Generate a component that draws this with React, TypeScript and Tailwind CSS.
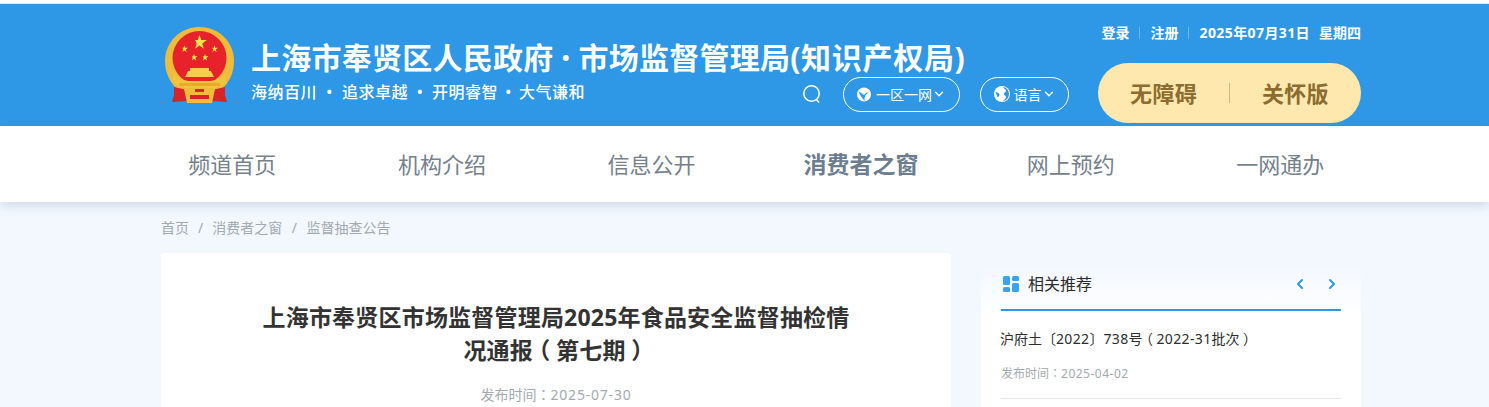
import { ChevronDown, ChevronLeft, ChevronRight } from "lucide-react";

const cjk = "font-['Noto_Sans','Noto_Sans_CJK_SC',sans-serif]";

const navItems = ["频道首页", "机构介绍", "信息公开", "消费者之窗", "网上预约", "一网通办"];

function Colon() {
  return <span className="font-['Noto_Sans_CJK_TC',sans-serif] leading-none">：</span>;
}

function Emblem() {
  const star = "M0-5 1.2-1.6 4.8-1.6 1.9.6 2.9 4.1 0 2 -2.9 4.1 -1.9.6 -2.9-1.6 -1.2-1.6Z";
  return (
    <svg width="70" height="78" viewBox="0 0 70 78" className="shrink-0">
      <path d="M34.5 0C15 0 0 15 0 34c0 13 6 23 13 29h43c7-6 13-16 13-29C69 15 54 0 34.5 0Z" fill="#eebb3a" />
      <circle cx="34.5" cy="31" r="27" fill="#e8222b" />
      <path transform="translate(34.5 15.5) scale(1.5)" d={star} fill="#ffe14d" />
      <path transform="translate(19.5 22) scale(.72)" d={star} fill="#ffe14d" />
      <path transform="translate(49.5 22) scale(.72)" d={star} fill="#ffe14d" />
      <path transform="translate(29 30.5) scale(.72)" d={star} fill="#ffe14d" />
      <path transform="translate(40 30.5) scale(.72)" d={star} fill="#ffe14d" />
      <path d="M25 41h19v3h2l3 6H20l3-6h2Z" fill="#f5cd4e" />
      <path d="M9 46c4 6 10 8 17 8h17c7 0 13-2 17-8l2 10-12 5H19L7 56Z" fill="#f1c33f" />
      <path d="M14 56h41v3H14Z" fill="#e8a92c" />
      <path d="M9 60l13 3 3 9-3 2-15 1 2-7Z" fill="#d9232b" />
      <path d="M60 60l-13 3-3 9 3 2 15 1-2-7Z" fill="#d9232b" />
      <path d="M19 62h31l-3 14H22Z" fill="#f0bd38" />
      <path d="M25 68h19v4H25Z" fill="#d9232b" />
      <path d="M30 62h9v3h-9Z" fill="#d9232b" />
    </svg>
  );
}

function Globe() {
  return (
    <svg width="16" height="16" viewBox="0 0 16 16" className="shrink-0">
      <circle cx="8" cy="8" r="8" fill="#fff" />
      <path d="M9 1c1 2 3 2 3 4 0 1-2 1-2 3s2 1 2 3-2 3-3 4c3 0 6-3 6-7s-3-7-6-7ZM1.500 6c2 0 3 1 4 2 0 2-1 3-2 3Z" fill="#2e98e6" />
    </svg>
  );
}

function AreaIcon() {
  return (
    <svg width="14" height="15" viewBox="0 0 14 15" className="shrink-0">
      <circle cx="7" cy="7.500" r="7" fill="#fff" />
      <path d="M1.500 4.500c3 2 6 2 11 .5-2 1-3 2-4 3-1 2-1 4-1 6-2-3-5-6-6-9.500Z" fill="#2e98e6" />
      <path d="M4 6.500l5-.5-2 2Z" fill="#fff" />
    </svg>
  );
}

export default function App() {
  return (
    <div className={`h-[407px] overflow-hidden bg-[#f3f8ff] ${cjk}`}>
      <div className="h-1 border-t-2 border-b border-t-white border-b-[#e4e6e8] bg-white" />
      {/* Header */}
      <header className="h-[122px] bg-[#2e98e6] pl-[161px]">
        <div className="flex h-full w-[1200px] justify-between">
          <div className="flex w-[600px] pt-[23px] pl-[4px]">
            <Emblem />
            <div className="ml-[16px] flex flex-col">
              <h1 className="mt-[11px] flex items-center text-[30px] leading-[40px] font-bold tracking-[0.25px] whitespace-nowrap text-white">
                <span>上海市奉贤区人民政府</span>
                <span className="w-[25px] text-center text-[20px]">•</span>
                <span>市场监督管理局</span>
                <span className="tracking-[0.7px]">(知识产权局)</span>
              </h1>
              <p className="mt-[4px] flex text-[16px] leading-[20px] font-medium tracking-[0.5px] whitespace-nowrap text-white">
                <span>海纳百川</span>
                <span className="w-[25px] text-center">•</span>
                <span>追求卓越</span>
                <span className="w-[24px] text-center">•</span>
                <span>开明睿智</span>
                <span className="w-[21px] text-center">•</span>
                <span>大气谦和</span>
              </p>
            </div>
          </div>
          <div className="flex flex-col items-end">
            <div className="mt-[19px] flex items-center text-[14px] leading-5 font-bold whitespace-nowrap text-white">
              <span>登录</span>
              <span className="mr-[11px] ml-[9px] h-3 w-px bg-[#6fb8ee]" />
              <span>注册</span>
              <span className="mr-[11px] ml-[9px] h-3 w-px bg-[#6fb8ee]" />
              <span className="tracking-[0.4px]">2025年07月31日</span>
              <span className="ml-[9px]">星期四</span>
            </div>
            <div className="mt-[20px] flex items-center">
              <svg width="20" height="20" viewBox="0 0 20 20" fill="none" stroke="#fff" strokeWidth="1.6" className="mt-[2px] mr-[21px]">
                <circle cx="9.500" cy="9.500" r="7.700" />
                <path d="M14.500 15.500l2.500 3" />
              </svg>
              <div className="mt-[2px] flex h-[35px] w-[117px] items-center justify-center rounded-full border border-white text-[14px] text-white">
                <AreaIcon />
                <span className="ml-[5px]">一区一网</span>
                <ChevronDown className="h-[14px] w-[14px]" strokeWidth={2.5} />
              </div>
              <div className="mt-[2px] ml-[20px] flex h-[35px] w-[89px] items-center justify-center rounded-full border border-white text-[14px] text-white">
                <Globe />
                <span className="ml-[4px]">语言</span>
                <ChevronDown className="h-[14px] w-[14px]" strokeWidth={2.5} />
              </div>
              <div className="ml-[29px] flex h-[60px] w-[263px] items-center justify-center rounded-[30px] bg-[#fee8ae] text-[22px] font-bold tracking-[0.3px] text-[#8c6d2f]">
                <span>无障碍</span>
                <span className="mx-[32px] h-5 w-px bg-[#d2b778]" />
                <span>关怀版</span>
              </div>
            </div>
          </div>
        </div>
      </header>

      {/* Nav */}
      <nav className="flex h-[76px] bg-white pl-[127.500px] shadow-[0_4px_10px_rgba(110,130,160,0.25)]">
        {navItems.map((item, i) => (
          <a
            key={item}
            className={`flex w-[209.6px] items-center justify-center whitespace-nowrap ${
              i === 3 ? "text-[23px] font-bold text-[#6b7d8f]" : "text-[22px] font-normal text-[#75818c]"
            }`}
          >
            {item}
          </a>
        ))}
      </nav>

      {/* Breadcrumb */}
      <div className="flex items-center pt-[16px] pl-[161px] text-[14px] leading-5 text-[#a3a9b0]">
        <span>首页</span>
        <span className="mx-[9px]">/</span>
        <span>消费者之窗</span>
        <span className="mx-[9.500px]">/</span>
        <span>监督抽查公告</span>
      </div>

      <div className="mt-[15px] flex pl-[161px]">
        {/* Article */}
        <main className="h-[200px] w-[790px] rounded-t-[4px] bg-white px-[95px] pt-[48px] text-center">
          <h2 className="text-[23px] leading-[33px] font-bold tracking-[0.2px] text-[#333]">
            <span className="block">上海市奉贤区市场监督管理局2025年食品安全监督抽检情</span>
            <span className="flex justify-center">
              <span>况通报</span>
              <span className="w-[23px] text-center [font-feature-settings:'halt']">（</span>
              <span>第七期</span>
              <span className="w-[23px] text-center [font-feature-settings:'halt']">）</span>
            </span>
          </h2>
          <p className="mt-[18px] text-[14px] leading-5 text-[#a3a9b0]">
            发布时间<Colon />
            <span className="tracking-[0.8px]">2025-07-30</span>
          </p>
        </main>

        {/* Sidebar */}
        <aside className="mt-[13px] ml-[30px] h-[200px] w-[380px] bg-gradient-to-b from-[#f3f8ff] to-white to-[50px] px-[20px]">
          <div className="flex h-[45px] items-center justify-between border-b-2 border-[#2e98e6] pb-[8px]">
            <div className="flex items-center">
              <svg width="16" height="16" viewBox="0 0 16 16" className="ml-[2px]">
                <rect x="0" y="0" width="7" height="9" rx="1.500" fill="#38a3f0" />
                <rect x="9" y="0" width="7" height="5" rx="1.500" fill="#38a3f0" />
                <rect x="0" y="11" width="7" height="5" rx="1.500" fill="#38a3f0" />
                <rect x="9" y="7" width="7" height="9" rx="1.500" fill="#38a3f0" />
              </svg>
              <span className="ml-[9px] text-[16px] text-[#2c2c2c]">相关推荐</span>
            </div>
            <div className="mr-[1px] flex items-center gap-[16px] text-[#2e98e6]">
              <ChevronLeft className="h-[16px] w-[16px]" strokeWidth={3} />
              <ChevronRight className="h-[16px] w-[16px]" strokeWidth={3} />
            </div>
          </div>
          <p className="mt-[18px] -ml-px flex text-[14px] leading-5 whitespace-nowrap text-[#2c2c2c]">
            <span>沪府土〔</span>
            <span className="tracking-[0.35px]">2022</span>
            <span>〕</span>
            <span className="tracking-[0.35px]">738</span>
            <span>号</span>
            <span className="w-[14px] text-center [font-feature-settings:'halt']">（</span>
            <span className="tracking-[0.35px]">2022-31</span>
            <span>批次</span>
            <span className="w-[14px] text-center [font-feature-settings:'halt']">）</span>
          </p>
          <p className="mt-[15px] text-[12px] leading-5 text-[#a3a9b0]">
            发布时间<Colon />
            <span className="tracking-[0.5px]">2025-04-02</span>
          </p>
          <div className="mt-[14px] border-b border-[#e4e6ea]" />
        </aside>
      </div>
    </div>
  );
}
